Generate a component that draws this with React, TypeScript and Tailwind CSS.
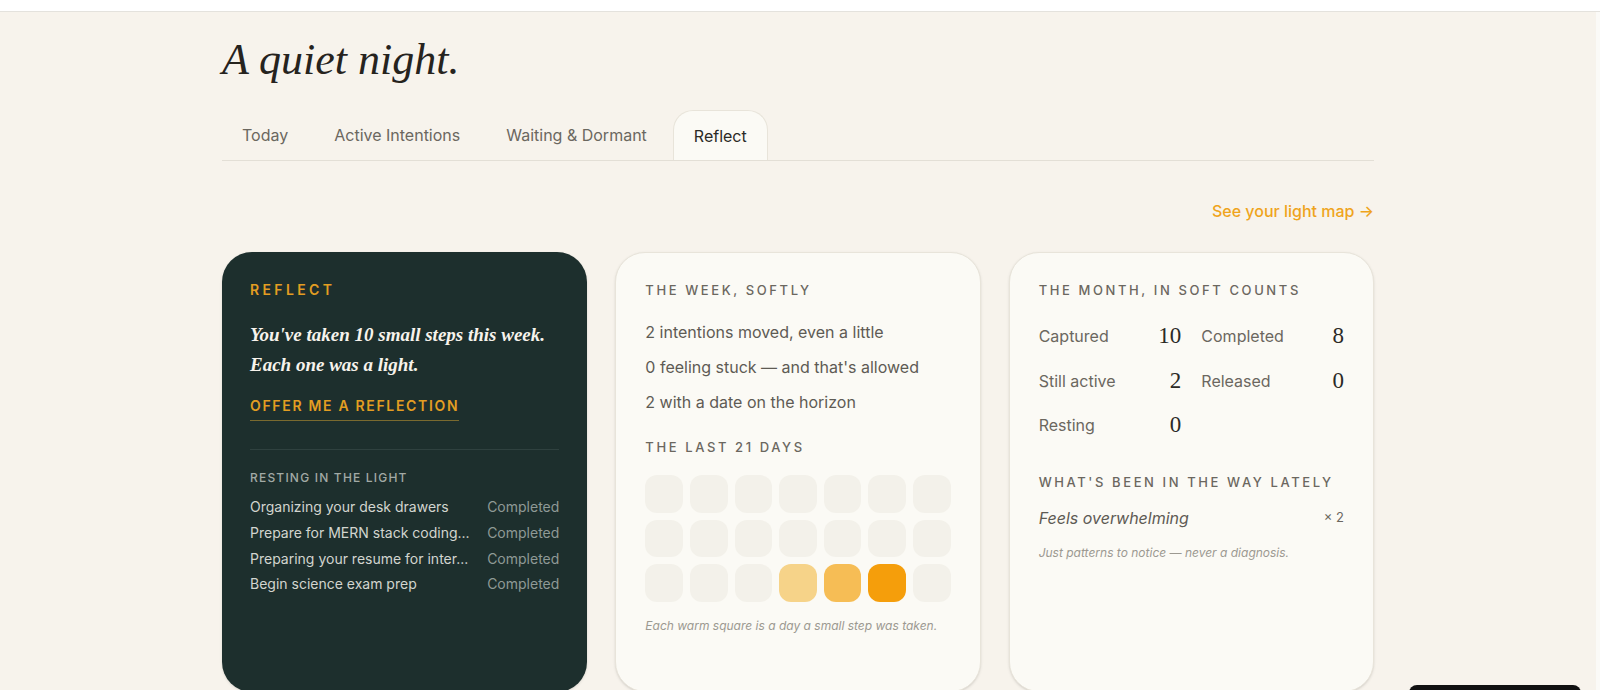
import React from 'react';

const serif = "font-['Liberation_Serif',serif]";

const resting = [
  'Organizing your desk drawers',
  'Prepare for MERN stack coding...',
  'Preparing your resume for inter...',
  'Begin science exam prep',
];

const week = ['2 intentions moved, even a little', "0 feeling stuck — and that's allowed", '2 with a date on the horizon'];

const counts = [
  ['Captured', '10'],
  ['Completed', '8'],
  ['Still active', '2'],
  ['Released', '0'],
  ['Resting', '0'],
];

const warm: Record<number, string> = {
  17: 'bg-[#f6d389]',
  18: 'bg-[#f6bd55]',
  19: 'bg-[#f59e0b]',
};

const Tab = ({ label, active }: { label: string; active?: boolean }) => (
  <div
    className={
      active
        ? 'h-[50px] px-5 flex items-center rounded-t-[20px] border border-b-0 border-[#e8e4da] bg-[#fbfaf5] text-[#2b2a26]'
        : 'h-[50px] px-5 flex items-center text-[#6b675f]'
    }
  >
    {label}
  </div>
);

const Heading = ({ children }: { children: React.ReactNode }) => (
  <div className="text-[13px] leading-[19px] tracking-[0.2em] font-medium text-[#6b675f] uppercase">{children}</div>
);

export default function App() {
  return (
    <div className="w-[1600px] h-[690px] overflow-hidden bg-[#f7f3ec] font-['Inter',sans-serif] flex flex-col">
      <div className="h-3 shrink-0 bg-white border-b border-[#e4e2dd]" />
      <div className="flex flex-1 min-h-0">
        <main className="w-[1596px] flex justify-center">
          <div className="w-[1152px]">
            <h1 className={`${serif} italic text-[44px] leading-[52px] mt-[22px] text-[#26231e]`}>A quiet night.</h1>
            <nav className="flex gap-1.5 mt-6 h-[51px] border-b border-[#e3dfd6] text-[16px]">
              <Tab label="Today" />
              <Tab label="Active Intentions" />
              <Tab label="Waiting & Dormant" />
              <Tab label="Reflect" active />
            </nav>
            <div className="flex justify-end mt-[38px] text-[16px] leading-6 font-medium text-[#efa41c]">See your light map →</div>
            <div className="grid grid-cols-3 gap-7 mt-[29px]">
              <section className="h-[440px] rounded-[30px] bg-[#1d2f2d] px-7 pt-7 shadow-sm">
                <div className="text-[14px] leading-5 font-semibold tracking-[0.24em] text-[#e39e22]">REFLECT</div>
                <p className={`${serif} italic font-bold mt-[20px] text-[19px] leading-[30px] text-[#f7f3ec]`}>
                  You've taken 10 small steps this week. Each one was a light.
                </p>
                <div className="mt-[16px] inline-block border-b border-[#7a6a2f] pb-1 text-[14px] leading-5 font-semibold tracking-[0.12em] text-[#e39e22]">
                  OFFER ME A REFLECTION
                </div>
                <div className="mt-7 border-t border-[#2f413f] pt-5">
                  <div className="text-[12px] leading-4 font-medium tracking-[0.1em] text-[#a2aaa5]">RESTING IN THE LIGHT</div>
                  <div className="mt-[8px] flex flex-col">
                    {resting.map((r) => (
                      <div key={r} className="flex justify-between h-[25.7px] items-center text-[14px]">
                        <span className="text-[#d2d5cf]">{r}</span>
                        <span className="text-[#8f9a96]">Completed</span>
                      </div>
                    ))}
                  </div>
                </div>
              </section>

              <section className="h-[440px] rounded-[30px] border border-[#e8e4da] bg-[#fbfaf5] px-[29px] pt-7 shadow-sm">
                <Heading>THE WEEK, SOFTLY</Heading>
                <div className="mt-[14px] flex flex-col text-[16px] text-[#5e5b54]">
                  {week.map((w) => (
                    <div key={w} className="h-[35.4px] flex items-center">{w}</div>
                  ))}
                </div>
                <div className="mt-[18px]">
                  <Heading>THE LAST 21 DAYS</Heading>
                </div>
                <div className="grid grid-cols-7 gap-[7px] mt-[18px]">
                  {Array.from({ length: 21 }).map((_, i) => (
                    <div key={i} className={`aspect-square rounded-xl ${warm[i] ?? 'bg-[#f3f1ea]'}`} />
                  ))}
                </div>
                <p className="mt-[14px] text-[12px] leading-[19px] italic text-[#9c9991]">Each warm square is a day a small step was taken.</p>
              </section>

              <section className="h-[440px] rounded-[30px] border border-[#e8e4da] bg-[#fbfaf5] px-[29px] pt-7 shadow-sm">
                <Heading>THE MONTH, IN SOFT COUNTS</Heading>
                <div className="grid grid-cols-2 gap-x-5 mt-[14px]">
                  {counts.map(([k, v]) => (
                    <div key={k} className="h-[44.6px] flex items-center justify-between">
                      <span className="text-[16px] text-[#6b675f]">{k}</span>
                      <span className={`${serif} text-[23px] text-[#2b2a26]`}>{v}</span>
                    </div>
                  ))}
                </div>
                <div className="mt-[25px]">
                  <Heading>WHAT'S BEEN IN THE WAY LATELY</Heading>
                </div>
                <div className="flex justify-between items-center mt-[14px] h-6">
                  <span className="italic text-[16px] text-[#5e5b54]">Feels overwhelming</span>
                  <span className="text-[13px] text-[#6b675f]">× 2</span>
                </div>
                <p className="mt-[14px] text-[12px] leading-[18px] italic text-[#9c9991]">Just patterns to notice — never a diagnosis.</p>
              </section>
            </div>
          </div>
        </main>
        <div className="w-1 bg-[#fbfaf7]" />
      </div>
      <div className="absolute left-[1409px] top-[685px] w-[172px] h-5 rounded-t-lg bg-[#111]" />
    </div>
  );
}
